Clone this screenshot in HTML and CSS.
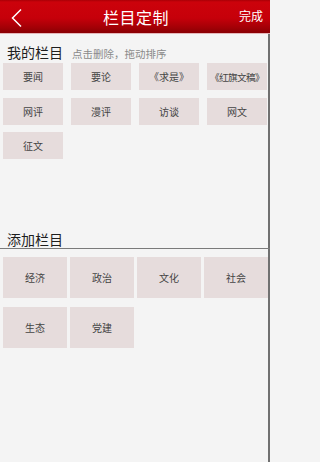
FILE: index.html
```html
<!DOCTYPE html>
<html lang="zh">
<head>
<meta charset="utf-8">
<link rel="stylesheet" href="styles.css">
</head>
<body>
<div class="app">
  <header class="topbar">
    <svg class="back" width="14" height="20" viewBox="0 0 14 20"><path d="M11 1.5 L2.5 10 L11 18.5" fill="none" stroke="#fff" stroke-width="1.5"/></svg>
    <div class="title">栏目定制</div>
    <div class="done">完成</div>
  </header>
  <main class="content">
    <section class="mine">
      <div class="sec-head"><span class="sec-title">我的栏目</span><span class="hint">点击删除，拖动排序</span></div>
      <div class="grid-mine">
        <div class="tile">要闻</div>
        <div class="tile">要论</div>
        <div class="tile">《求是》</div>
        <div class="tile tight">《红旗文稿》</div>
        <div class="tile">网评</div>
        <div class="tile">漫评</div>
        <div class="tile">访谈</div>
        <div class="tile">网文</div>
        <div class="tile">征文</div>
      </div>
    </section>
    <section class="add">
      <div class="add-head"><span class="sec-title">添加栏目</span></div>
      <div class="grid-add">
        <div class="tile">经济</div>
        <div class="tile">政治</div>
        <div class="tile">文化</div>
        <div class="tile">社会</div>
        <div class="tile">生态</div>
        <div class="tile">党建</div>
      </div>
    </section>
  </main>
</div>
</body>
</html>
```
FILE: styles.css
```css
* { box-sizing: border-box; margin: 0; padding: 0; }
html, body { width: 270px; height: 462px; overflow: hidden; }
body {
  background: #f4f4f4;
  font-family: "Noto Sans CJK SC", "Noto Sans", sans-serif;
}
.app { display: flex; flex-direction: column; height: 462px; }
.topbar {
  height: 34px;
  flex: none;
  display: flex;
  align-items: center;
  position: relative;
  background: linear-gradient(#a90006 0, #cc020b 2px, #c6000a 55%, #a10006 85%, #8c0004 97%);
  border-bottom: 1px solid #e4b7b9;
}
.back { position: absolute; left: 10px; top: 8px; }
.title {
  flex: 1;
  text-align: center;
  color: #fff;
  font-size: 16px;
  line-height: 20px;
  letter-spacing: 0.5px;
  padding-left: 2px;
}
.done {
  position: absolute;
  right: 7px;
  top: 8px;
  color: #fff;
  font-size: 12px;
  line-height: 16px;
}
.content {
  flex: 1;
  border-right: 2px solid #707070;
}
.sec-head {
  display: flex;
  align-items: baseline;
  gap: 9px;
  padding: 8px 0 0 7px;
  height: 29px;
}
.sec-title { font-size: 14px; line-height: 20px; color: #1e1e1e; }
.hint { font-size: 10.5px; color: #8a8a8a; line-height: 14px; }
.tile {
  background: #e6dcdc;
  color: #444;
  font-size: 10px;
  display: flex;
  align-items: center;
  justify-content: center;
  white-space: nowrap;
}
.tight { letter-spacing: -0.6px; font-size: 9.6px; }
.grid-mine {
  display: grid;
  grid-template-columns: repeat(4, 60px);
  grid-auto-rows: 27px;
  column-gap: 8px;
  row-gap: 7.5px;
  padding-left: 3px;
}
.add { margin-top: 72px; }
.add-head {
  padding: 0 0 0 7px;
  height: 18px;
  display: flex;
  align-items: flex-end;
  border-bottom: 1px solid #7a7a7a;
  margin-right: -2px;
}
.add-head .sec-title { line-height: 18px; }
.grid-add {
  display: grid;
  grid-template-columns: repeat(4, 64px);
  grid-auto-rows: 41px;
  column-gap: 3px;
  row-gap: 8.5px;
  padding: 8px 0 0 3px;
}
```
